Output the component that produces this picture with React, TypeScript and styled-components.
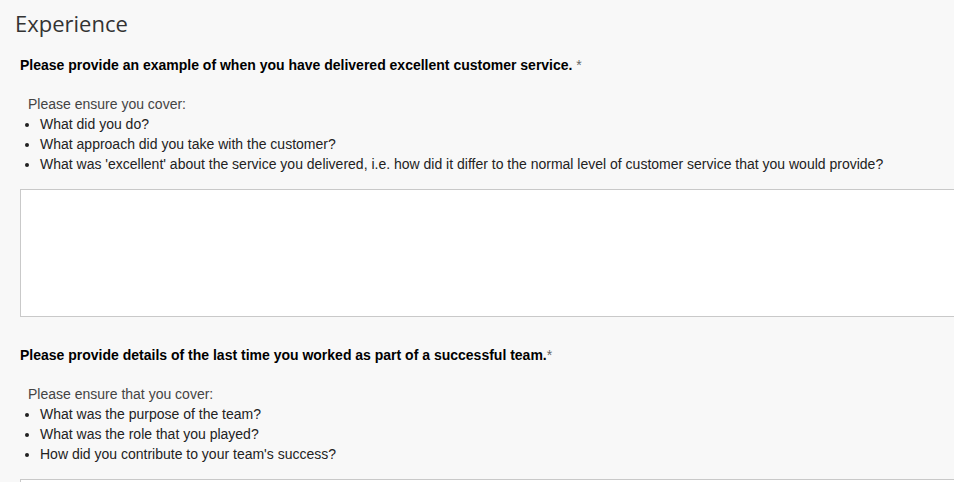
import React from "react";
import styled, { createGlobalStyle } from "styled-components";

const Global = createGlobalStyle`
  html, body {
    margin: 0;
    padding: 0;
    background: #f8f8f8;
    overflow: hidden;
  }
  * { box-sizing: border-box; }
`;

const Page = styled.div`
  width: 954px;
  min-height: 482px;
  background: #f8f8f8;
  font-family: Arial, "Liberation Sans", sans-serif;
`;

const Heading = styled.h2`
  margin: 0;
  padding: 7px 15px 0;
  font-family: "Open Sans", sans-serif;
  font-weight: 400;
  font-size: 22px;
  line-height: 32px;
  color: #333;
`;

const Section = styled.section<{ $top: number }>`
  padding-left: 20px;
  margin-top: ${(p) => p.$top}px;
`;

const Question = styled.div`
  font-size: 14px;
  line-height: 20px;
  font-weight: 700;
  color: #000;
`;

const Req = styled.span`
  font-weight: 400;
  color: #666;
`;

const Intro = styled.div`
  margin-top: 19px;
  padding-left: 8px;
  font-size: 14px;
  line-height: 20px;
  color: #444;
`;

const Points = styled.ul`
  margin: 0;
  padding-left: 20px;
  font-size: 14px;
  line-height: 20px;
  color: #222;
  list-style: disc;
`;

const Answer = styled.textarea`
  display: block;
  margin-top: 15px;
  width: 1000px;
  height: 128px;
  border: 1px solid #c9c9c9;
  background: #fff;
  resize: none;
  outline: none;
  font-family: Arial, "Liberation Sans", sans-serif;
`;

type Q = { question: string; req: string; intro: string; points: string[] };

const questions: Q[] = [
  {
    question: "Please provide an example of when you have delivered excellent customer service.",
    req: " *",
    intro: "Please ensure you cover:",
    points: [
      "What did you do?",
      "What approach did you take with the customer?",
      "What was 'excellent' about the service you delivered, i.e. how did it differ to the normal level of customer service that you would provide?",
    ],
  },
  {
    question: "Please provide details of the last time you worked as part of a successful team.",
    req: "*",
    intro: "Please ensure that you cover:",
    points: [
      "What was the purpose of the team?",
      "What was the role that you played?",
      "How did you contribute to your team's success?",
    ],
  },
];

export default function App() {
  return (
    <Page>
      <Global />
      <Heading>Experience</Heading>
      {questions.map((q, i) => (
        <Section key={i} $top={i === 0 ? 16 : 28}>
          <Question>
            {q.question}
            <Req>{q.req}</Req>
          </Question>
          <Intro>{q.intro}</Intro>
          <Points>
            {q.points.map((p) => (
              <li key={p}>{p}</li>
            ))}
          </Points>
          <Answer />
        </Section>
      ))}
    </Page>
  );
}
